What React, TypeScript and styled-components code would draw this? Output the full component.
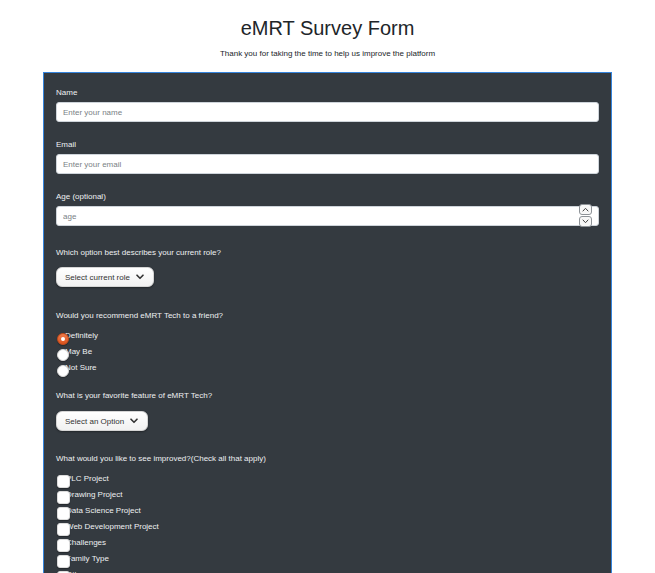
import React from "react";
import styled, { createGlobalStyle } from "styled-components";

const Global = createGlobalStyle`
  html, body { margin: 0; padding: 0; background: #ffffff; }
  body { font-family: "Liberation Sans", Arial, sans-serif; color: #212529; }
  * { box-sizing: border-box; }
`;

const Page = styled.div`
  display: flex;
  flex-direction: column;
  align-items: center;
  padding-top: 16px;
`;

const Title = styled.h1`
  margin: 0;
  font-size: 20px;
  font-weight: 400;
  line-height: 24px;
  color: #212529;
`;

const Subtitle = styled.p`
  margin: 9px 0 0;
  font-size: 8px;
  line-height: 10px;
  color: #212529;
`;

const Card = styled.form`
  width: 569px;
  margin-top: 13px;
  background: #343a40;
  border: 1px solid #3584dc;
  border-bottom: none;
  padding: 15px 12px 40px;
  display: flex;
  flex-direction: column;
  color: #eef0f2;
`;

const Section = styled.div<{ $mt: number }>`
  display: flex;
  flex-direction: column;
  margin-top: ${(p) => p.$mt}px;
`;

const Label = styled.label<{ $mb?: number }>`
  font-size: 8px;
  line-height: 10px;
  color: #eef0f2;
  margin-bottom: ${(p) => p.$mb ?? 4}px;
`;

const InputWrap = styled.div`
  position: relative;
`;

const TextInput = styled.input`
  display: block;
  width: 100%;
  height: 20px;
  border: 1px solid #ced4da;
  border-radius: 3px;
  background: #ffffff;
  padding: 0 6px;
  font-family: "Liberation Sans", Arial, sans-serif;
  font-size: 8px;
  color: #495057;
  outline: none;
  &::placeholder { color: #7a7f85; }
`;

const Spinner = styled.div`
  position: absolute;
  right: 7px;
  top: -2px;
  display: flex;
  flex-direction: column;
  gap: 1px;
`;

const SpinBtn = styled.span`
  width: 13px;
  height: 11px;
  border: 1px solid #8d9297;
  border-radius: 3px;
  background: #f7f7f7;
  display: flex;
  align-items: center;
  justify-content: center;
`;

const SelectButton = styled.button`
  align-self: flex-start;
  height: 20px;
  display: flex;
  align-items: center;
  gap: 6px;
  padding: 0 9px 0 8px;
  background: linear-gradient(#ffffff, #f1f1f1);
  border: 1px solid #d5d5d5;
  border-radius: 6px;
  box-shadow: 0 1px 2px rgba(0, 0, 0, 0.35);
  font-family: "Liberation Sans", Arial, sans-serif;
  font-size: 8px;
  color: #333333;
`;

const OptionRow = styled.label`
  display: flex;
  align-items: center;
  height: 16px;
  font-size: 8px;
  color: #eef0f2;
  padding-left: 1px;
`;

const OptionText = styled.span`
  margin-left: -4px;
  margin-top: -3px;
`;

const Radio = styled.span<{ $checked?: boolean }>`
  position: relative;
  z-index: 1;
  width: 12px;
  height: 12px;
  border-radius: 50%;
  flex: none;
  display: flex;
  align-items: center;
  justify-content: center;
  background: ${(p) => (p.$checked ? "linear-gradient(#f07a4a, #d9531e)" : "#ffffff")};
  border: 1px solid ${(p) => (p.$checked ? "#c44a19" : "#d8d8d8")};
  box-shadow: 0 1px 1px rgba(0, 0, 0, 0.3);
  margin-top: 3px;
  &::after {
    content: "";
    display: ${(p) => (p.$checked ? "block" : "none")};
    width: 4px;
    height: 4px;
    border-radius: 50%;
    background: #ffffff;
  }
`;

const Checkbox = styled.span`
  position: relative;
  z-index: 1;
  width: 13px;
  height: 13px;
  flex: none;
  border-radius: 3px;
  background: #ffffff;
  border: 1px solid #dcdcdc;
  box-shadow: 0 1px 1px rgba(0, 0, 0, 0.3);
  margin-top: 3px;
`;

const CheckText = styled.span`
  margin-left: -4px;
  margin-top: -3px;
`;

const Chevron = () => (
  <svg width="8" height="6" viewBox="0 0 8 6">
    <path d="M1 1.2 L4 4.3 L7 1.2" fill="none" stroke="#333" strokeWidth="1.6" strokeLinecap="round" strokeLinejoin="round" />
  </svg>
);

const SmallChevron = ({ up }: { up?: boolean }) => (
  <svg width="7" height="5" viewBox="0 0 7 5">
    <path
      d={up ? "M1 4 L3.5 1.3 L6 4" : "M1 1 L3.5 3.7 L6 1"}
      fill="none"
      stroke="#444"
      strokeWidth="1"
      strokeLinecap="round"
      strokeLinejoin="round"
    />
  </svg>
);

const radios = ["Definitely", "May Be", "Not Sure"];
const checks = [
  "PLC Project",
  "Drawing Project",
  "Data Science Project",
  "Web Development Project",
  "Challenges",
  "Family Type",
  "Others",
];

export default function App() {
  return (
    <>
      <Global />
      <Page>
        <Title>eMRT Survey Form</Title>
        <Subtitle>Thank you for taking the time to help us improve the platform</Subtitle>
        <Card>
          <Section $mt={0}>
            <Label>Name</Label>
            <TextInput placeholder="Enter your name" />
          </Section>
          <Section $mt={18}>
            <Label>Email</Label>
            <TextInput placeholder="Enter your email" />
          </Section>
          <Section $mt={18}>
            <Label>Age (optional)</Label>
            <InputWrap>
              <TextInput placeholder="age" />
              <Spinner>
                <SpinBtn>
                  <SmallChevron up />
                </SpinBtn>
                <SpinBtn>
                  <SmallChevron />
                </SpinBtn>
              </Spinner>
            </InputWrap>
          </Section>
          <Section $mt={22}>
            <Label $mb={9}>Which option best describes your current role?</Label>
            <SelectButton type="button">
              Select current role <Chevron />
            </SelectButton>
          </Section>
          <Section $mt={24}>
            <Label $mb={8}>Would you recommend eMRT Tech to a friend?</Label>
            {radios.map((r, i) => (
              <OptionRow key={r}>
                <Radio $checked={i === 0} />
                <OptionText>{r}</OptionText>
              </OptionRow>
            ))}
          </Section>
          <Section $mt={14}>
            <Label $mb={10}>What is your favorite feature of eMRT Tech?</Label>
            <SelectButton type="button">
              Select an Option <Chevron />
            </SelectButton>
          </Section>
          <Section $mt={23}>
            <Label $mb={8}>What would you like to see improved?(Check all that apply)</Label>
            {checks.map((c) => (
              <OptionRow key={c}>
                <Checkbox />
                <CheckText>{c}</CheckText>
              </OptionRow>
            ))}
          </Section>
        </Card>
      </Page>
    </>
  );
}
